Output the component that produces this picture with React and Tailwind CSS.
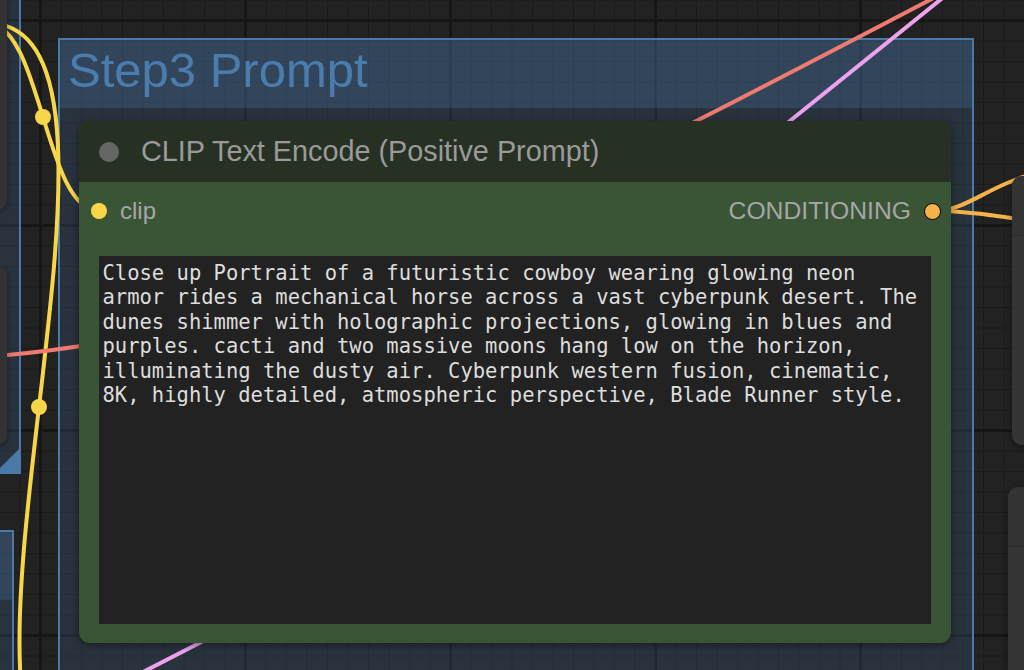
import React from "react";

const promptLines = [
  "Close up Portrait of a futuristic cowboy wearing glowing neon",
  "armor rides a mechanical horse across a vast cyberpunk desert. The",
  "dunes shimmer with holographic projections, glowing in blues and",
  "purples. cacti and two massive moons hang low on the horizon,",
  "illuminating the dusty air. Cyberpunk western fusion, cinematic,",
  "8K, highly detailed, atmospheric perspective, Blade Runner style.",
];

// links sit over the groups but under the nodes
const Links = () => (
  <svg className="absolute inset-0 h-full w-full" width="1024" height="670" viewBox="0 0 1024 670">
    <g fill="none" strokeLinecap="round" strokeWidth="4">
      <path d="M -13 23 C 42 23, 44 211, 99 211" stroke="#f8d64a" />
      <path d="M -13 23 C 181 23, -103 791, 91 791" stroke="#f8d64a" />
      <path d="M -13 357 C 300 330, 500 225, 945 -8" stroke="#ef7a70" />
      <path d="M 108 690 L 215 635" stroke="#eea2ee" />
      <path d="M 770 137 L 950 -8" stroke="#eea2ee" />
      <path d="M 933 211 C 968 211, 985 186, 1040 172" stroke="#f5b24a" />
      <path d="M 933 211 C 965 211, 985 214, 1040 222" stroke="#f5b24a" />
    </g>
    <circle cx="43" cy="117" r="8" fill="#f8d64a" />
    <circle cx="39" cy="407" r="8" fill="#f8d64a" />
  </svg>
);

const ClipNode = () => (
  <div className="absolute left-[79px] top-[121px] flex h-[522px] w-[872px] flex-col overflow-hidden rounded-[11px] bg-[#3a5436] font-['Liberation_Sans',Arial,sans-serif] shadow-[0_2px_8px_rgba(0,0,0,0.45)]">
    <div className="flex h-[61px] shrink-0 items-center bg-[#263124] pl-[20px]">
      <span className="h-[20px] w-[20px] rounded-full bg-[#666666]" />
      <span className="ml-[22px] text-[28.8px] leading-[61px] text-[#9a9a9a]">CLIP Text Encode (Positive Prompt)</span>
    </div>
    <div className="flex flex-1 flex-col px-[20px] pt-[12px] pb-[19px]">
      <div className="flex h-[34px] items-center justify-between">
        <div className="flex items-center">
          <span className="-ml-[8px] h-[16px] w-[16px] rounded-full bg-[#f8d64a]" />
          <span className="ml-[13px] text-[24px] leading-[34px] text-[#a6a6a6]">clip</span>
        </div>
        <div className="flex items-center">
          <span className="text-[24.7px] leading-[34px] text-[#a6a6a6]">CONDITIONING</span>
          <span className="-mr-[10px] ml-[13px] h-[17px] w-[17px] rounded-full border-[1.5px] border-black bg-[#f5b24a]" />
        </div>
      </div>
      <div className="mt-[28px] flex-1 bg-[#222222] pl-[3.5px] pt-[4.5px] font-['DejaVu_Sans_Mono',monospace] text-[20.5px] leading-[24.6px] text-[#dddddd]">
        {promptLines.map((line, i) => (
          <div key={i} className="whitespace-pre">{line}</div>
        ))}
      </div>
    </div>
  </div>
);

export default function App() {
  return (
    <div className="relative h-[670px] w-[1024px] overflow-hidden bg-[#222222] [background-image:linear-gradient(to_right,#161616_3px,transparent_3px),linear-gradient(to_bottom,#161616_3px,transparent_3px),linear-gradient(to_right,#1a1a1a_1px,transparent_1px),linear-gradient(to_bottom,#1a1a1a_1px,transparent_1px)] [background-size:205px_205px,205px_205px,20.5px_20.5px,20.5px_20.5px] [background-position:39px_19px,39px_19px,-1px_-0.5px,-1px_-0.5px]">
      {/* groups */}
      <div className="absolute left-[-300px] top-[-100px] h-[574px] w-[321px] border-2 border-[#4b79a8] bg-[rgba(70,115,165,0.22)]">
        <div className="absolute bottom-0 right-0 h-[23px] w-[23px] bg-[#4b79a8] [clip-path:polygon(100%_0,100%_100%,0_100%)]" />
      </div>
      <div className="absolute left-[-300px] top-[530px] h-[300px] w-[314px] border-2 border-[#4b79a8] bg-[rgba(70,115,165,0.22)]">
        <div className="h-[68px] bg-[rgba(80,130,185,0.24)]" />
      </div>
      <div className="absolute left-[58px] top-[38px] h-[700px] w-[916px] border-2 border-[#4b79a8] bg-[rgba(70,115,165,0.22)]">
        <div className="h-[68px] bg-[rgba(80,130,185,0.24)] pl-[8px] font-['Liberation_Sans',Arial,sans-serif] text-[49px] leading-[60px] text-[#4b7cae]">
          Step3 Prompt
        </div>
      </div>

      <Links />

      {/* neighbouring nodes, mostly off screen */}
      <div className="absolute left-[-200px] top-[-100px] h-[310px] w-[207px] rounded-[10px] bg-[#333333] shadow-[0_2px_6px_rgba(0,0,0,0.4)]" />
      <div className="absolute left-[-200px] top-[267px] h-[178px] w-[207px] rounded-[10px] bg-[#333333] shadow-[0_2px_6px_rgba(0,0,0,0.4)]" />
      <div className="absolute left-[1012px] top-[176px] flex h-[269px] w-[200px] flex-col overflow-hidden rounded-[10px] bg-[#353535] shadow-[0_2px_6px_rgba(0,0,0,0.4)]">
        <div className="h-[60px] border-b border-[#2c2c2c] bg-[#333333]" />
      </div>
      <div className="absolute left-[1008px] top-[487px] flex h-[300px] w-[200px] flex-col overflow-hidden rounded-[10px] bg-[#353535] shadow-[0_2px_6px_rgba(0,0,0,0.4)]">
        <div className="h-[60px] border-b border-[#2c2c2c] bg-[#333333]" />
      </div>

      <ClipNode />
    </div>
  );
}
